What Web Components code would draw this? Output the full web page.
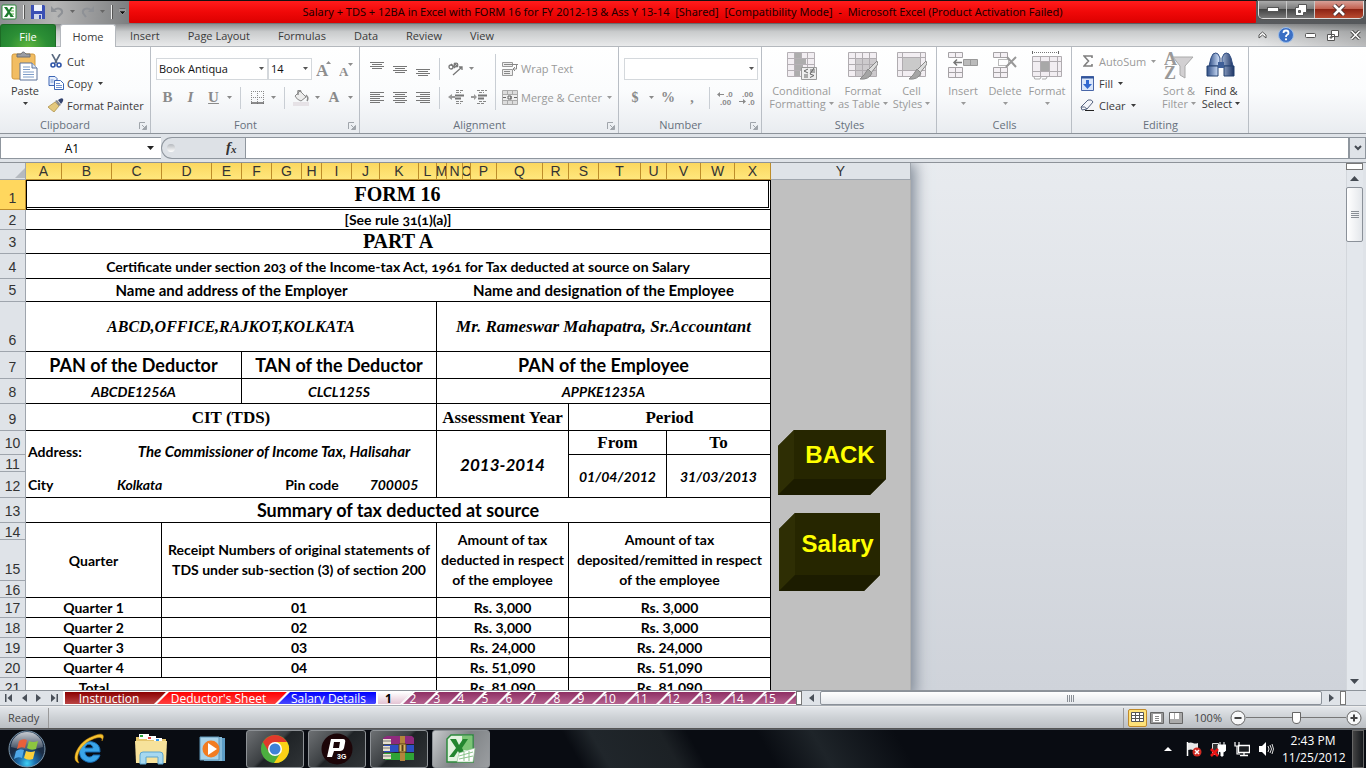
<!DOCTYPE html>
<html lang="en">
<head>
<meta charset="utf-8">
<title>Microsoft Excel</title>
<style>
html, body { margin: 0; height: 100%; }
body { font-family: "Open Sans", sans-serif; font-size: 11px; overflow: hidden; }
</style>
</head>
<body>
<xl-desktop></xl-desktop>
<script>
const ICONS = {
  excel: [16, 16, `<rect x="1" y="1" width="14" height="14" rx="1" fill="#fff" stroke="#2d8a3c"/><path d="M10 3h3v2h-3zM10 6h3v2h-3zM10 9h3v2h-3z" fill="#a8d8a0"/><path d="M3 3h3l2 3 2-3h2L9 8l4 5H9.500L8 10l-2 3H3l3.500-5z" fill="#1f7d2f"/>`],
  save: [14, 14, `<path d="M0 0h13l1 1v13H0z" fill="#3a4fb4"/><path d="M3 0h8v6H3z" fill="#eef2fb"/><path d="M3 9h8v5H3z" fill="#cfd6ea"/><path d="M8 10h2v4H8z" fill="#3a4fb4"/>`],
  undo: [13, 12, `<path d="M3 4c4-3 9-1 8 3l-4 4" fill="none" stroke="#8e9196" stroke-width="2"/><path d="M0 6V0l6 6z" fill="#8e9196"/>`],
  redo: [13, 12, `<path d="M10 4C6 1 1 3 2 7l3 4" fill="none" stroke="#8e9196" stroke-width="2"/><path d="M13 6V0L7 6z" fill="#8e9196"/>`],
  custom: [7, 7, `<path d="M0 0h7v1H0zM0 3h7L3.500 6.500z" fill="#111" stroke="#eee" stroke-width=".4"/>`],
  arrow: [5, 3, `<path d="M0 0h5L2.500 3z" fill="currentColor"/>`],
  arrowBig: [7, 4, `<path d="M0 0h7L3.500 4z" fill="currentColor"/>`],
  paste: [28, 30, `<rect x="1" y="3" width="23" height="25" rx="2" fill="#f2bd62" stroke="#d39a3f"/><path d="M6 5V3h4q2-4 5 0h4v3H6z" fill="#9b9da3" stroke="#6d7077"/><path d="M9 12h12l5 5v12H9z" fill="#fff" stroke="#5d7299"/><path d="M21 12v5h5" fill="#d9e4f4" stroke="#5d7299"/><path d="M12 16h7M12 18.500h7M12 21h11M12 23.500h11M12 26h11" stroke="#7d9cc8"/>`],
  cut: [12, 14, `<path d="M2 0l5 9M10 0L5 9" stroke="#5a6a80" stroke-width="1.600"/><circle cx="3" cy="11" r="2" fill="none" stroke="#2f55a8" stroke-width="1.600"/><circle cx="9" cy="11" r="2" fill="none" stroke="#2f55a8" stroke-width="1.600"/>`],
  copy: [16, 14, `<path d="M1 .5h6l2 2v7H1z" fill="#e6eefc" stroke="#3c65b4"/><path d="M6.500 4.500h6l3 3v6h-9z" fill="#fff" stroke="#3c65b4"/><path d="M2.500 4h3M2.500 6h3M8 7.500h4M8 9.500h6M8 11.500h6" stroke="#7293d0"/>`],
  brush: [16, 14, `<path d="M0 9l7-5 4 4-5 6q-4-3-6-5z" fill="#e3c87d" stroke="#a8893c" stroke-width=".7"/><path d="M7 3l2-1 4 5-2 1z" fill="#888"/><path d="M10 2q4-3 5-1t-2 5z" fill="#34436e"/>`],
  grow: [15, 16, `<text x="0" y="15" font-family="Liberation Serif" font-weight="bold" font-size="17" fill="#8e8e8e">A</text><path d="M10 3h5l-2.500-3z" fill="#8e8e8e"/>`],
  shrink: [15, 16, `<text x="0" y="15" font-family="Liberation Serif" font-weight="bold" font-size="13" fill="#8e8e8e">A</text><path d="M9 2h5l-2.500 3z" fill="#8e8e8e"/>`],
  borders: [13, 13, `<path d="M0 .5h13M.5 0v13M12.500 0v13M6.500 0v13M0 6.500h13" stroke="#8a8a8a" stroke-dasharray="1 1"/><path d="M0 12h13" stroke="#666" stroke-width="1.500"/>`],
  bucket: [16, 16, `<path d="M2 6l5-5 6 6-5 4q-4-1-6-5z" fill="#ececec" stroke="#8b8b8b"/><path d="M5 5V1q2-2 3 1M13 5q3 3 1 6" fill="none" stroke="#8b8b8b" stroke-width="1.500"/><path d="M0 12h16v4H0z" fill="#e6e2e6"/>`],
  alTop: [14, 16, `<path d="M0 1.500h14M2 3.500h10M0 5.500h14M2 7.500h10" stroke="#777"/>`],
  alMid: [14, 16, `<path d="M0 5.500h14M2 7.500h10M0 9.500h14M2 11.500h10" stroke="#777"/>`],
  alBot: [14, 16, `<path d="M0 8.500h14M2 10.500h10M0 12.500h14M2 14.500h10" stroke="#777"/>`],
  left: [14, 13, `<path d="M0 1.500h14M0 3.500h10M0 5.500h14M0 7.500h10M0 9.500h14M0 11.500h10" stroke="#777"/>`],
  center: [14, 13, `<path d="M0 1.500h14M2 3.500h10M0 5.500h14M2 7.500h10M0 9.500h14M2 11.500h10" stroke="#777"/>`],
  right: [14, 13, `<path d="M0 1.500h14M4 3.500h10M0 5.500h14M4 7.500h10M0 9.500h14M4 11.500h10" stroke="#777"/>`],
  orient: [16, 14, `<g fill="none" stroke="#777" stroke-width="1.300"><circle cx="3" cy="5" r="2"/><path d="M3 2l4 4M6 1l4 4"/><circle cx="8" cy="3" r="1.800"/><path d="M5 13l9-8M11 5h3v3"/></g>`],
  outdent: [16, 15, `<path d="M8 .5h8M8 2.500h5M8 11.500h8M8 13.500h5" stroke="#888" stroke-dasharray="3 1"/><path d="M7 5.500h9M7 8.500h6" stroke="#777" stroke-width="2"/><path d="M0 7l4-3v2h3v2H4v2z" fill="#999"/>`],
  indent: [16, 15, `<path d="M6 .5h10M8 2.500h5M8 11.500h8M6 13.500h7" stroke="#888" stroke-dasharray="3 1"/><path d="M7 5.500h9M7 8.500h6" stroke="#777" stroke-width="2"/><path d="M6 7L3 4v2H0v2h3v2z" fill="#999"/>`],
  wrap: [16, 15, `<path d="M.5 1.500h10v4H.5zM.5 8.500h10v6H.5z" fill="#eee" stroke="#999"/><path d="M2 3.500h14M2 10.500h6M2 12.500h6" stroke="#888"/><path d="M14.500 4v4h-3M13 6l-2 2 2 2" fill="none" stroke="#888"/>`],
  merge: [16, 15, `<path d="M.5.500h15v14H.5zM0 4.500h16M0 10.500h16M5.500 0v4M10.500 0v4M5.500 11v4M10.500 11v4" fill="#ddd" stroke="#aaa"/><path d="M1 5h14v5H1z" fill="#eee"/><path d="M1 7.500h3M12 7.500h3M6 6h3v3H6zM9 6v3.500" fill="none" stroke="#666"/>`],
  inc: [16, 14, `<text x="9" y="6" font-family="Liberation Sans" font-weight="bold" font-size="8" fill="#8a8a8a">.0</text><text x="3" y="14" font-family="Liberation Sans" font-weight="bold" font-size="8" fill="#8a8a8a">.00</text><path d="M0 3.500l3-2.500v2h4v1H3v2z" fill="#8a8a8a"/>`],
  dec: [16, 14, `<text x="3" y="6" font-family="Liberation Sans" font-weight="bold" font-size="8" fill="#8a8a8a">.00</text><text x="9" y="14" font-family="Liberation Sans" font-weight="bold" font-size="8" fill="#8a8a8a">.0</text><path d="M7 10.500L4 8v2H0v1h4v2z" fill="#8a8a8a"/>`],
  cond: [30, 30, `<path d="M.5 1.500h27v24H.5zM7.500 1v24M14.500 1v24M20.500 1v24M0 7.500h28M0 13.500h28M0 19.500h28" fill="#f2eef2" stroke="#b5b0b5"/><path d="M8 2h6v5H8zM8 8h11v5H8zM8 14h8v5H8zM8 20h5v5H8z" fill="#adadad"/><path d="M14.500 16.500h15v12h-15z" fill="#eee" stroke="#999"/><path d="M21 18l-4 2 4 2M17 24h4M17 26h4M23 19h5M23 21h5M27 17l-4 6M23 23l4 1.500-4 2" fill="none" stroke="#666"/>`],
  fmtTable: [30, 30, `<path d="M.5 1.500h28v24H.500zM7.500 1v24M14.500 1v24M21.500 1v24M0 7.500h28M0 13.500h28M0 19.500h28" fill="#f2eef2" stroke="#b0acb0"/><path d="M8 8h20v17H8z" fill="#cdcacd"/><path d="M14.500 8v17M21.500 8v17M8 13.500h20M8 19.500h20" stroke="#b0acb0"/><path d="M29 10l-9 9 3 3 7-9z" fill="#ddd" stroke="#888"/><path d="M20 18l4 4q-3 7-12 6 4-3 8-10z" fill="#a5a5a5" stroke="#8a8a8a"/>`],
  cellSt: [30, 30, `<path d="M.5 1.500h28v24H.500zM5.500 1v24M23.500 1v24M0 6.500h28M0 19.500h28" fill="#f2eef2" stroke="#b0acb0"/><path d="M6 7h17v12H6z" fill="#cacaca"/><path d="M29 10l-9 9 3 3 7-9z" fill="#ddd" stroke="#888"/><path d="M20 18l4 4q-3 7-12 6 4-3 8-10z" fill="#a5a5a5" stroke="#8a8a8a"/>`],
  insert: [30, 30, `<path d="M.5 1.500h14v5H.500zM7.500 1v5M.5 16.500h14v10H.500zM7.500 16v10M0 21.500h14" fill="#f4f0f4" stroke="#a5a2a5"/><path d="M15.500 8.500h14v6h-14zM22.500 8v6" fill="#bbb" stroke="#999"/><path d="M6 11.500h8M9 8.500l-3 3 3 3" fill="none" stroke="#777" stroke-width="1.500"/>`],
  delete: [30, 30, `<path d="M3.500 1.500h14v5h-14zM10.500 1v5M3.500 16.500h14v10h-14zM10.500 16v10M3 21.500h14" fill="#f4f0f4" stroke="#a5a2a5"/><path d="M8.500 8.500h10v6h-10z" fill="none" stroke="#777" stroke-dasharray="1 1"/><path d="M17 6l9 10M26 6l-10 10" stroke="#999" stroke-width="2"/>`],
  format: [30, 30, `<path d="M.5 0v3M26.500 0v3" stroke="#666"/><path d="M2 1.500h23" stroke="#777" stroke-dasharray="1 1"/><path d="M.5 5.500h29v20H.500zM8.500 5v20M17.500 5v20M25.500 5v20M0 10.500h30M0 20.500h30" fill="#f2eef2" stroke="#b0acb0"/><path d="M9 11h8v9H9z" fill="#a8a8a8"/><path d="M2 26q0 3 3 2h3l1-2M10 28h4l1-2" fill="none" stroke="#aaa"/>`],
  sigma: [10, 12, `<path d="M9 3V1H1l4.500 5L1 11h8V9" fill="none" stroke="#7f7f7f" stroke-width="1.600"/>`],
  fill: [14, 15, `<path d="M.5.500h12v14H.500z" fill="#d9e6fa" stroke="#4a67a8"/><path d="M0 1.500h13" stroke="#31549b" stroke-width="2"/><path d="M5 4h3v4h3l-4.500 5L2 8h3z" fill="#3168d0"/>`],
  clear: [15, 13, `<path d="M1 8l7-7q4-1 5 2l-6 7-5 1z" fill="#f3f5fa" stroke="#55637f"/><path d="M1 8q4-1 6 2" fill="none" stroke="#55637f"/><path d="M5 11.500h9" stroke="#222"/>`],
  sort: [30, 30, `<text x="0" y="14" font-family="Liberation Serif" font-weight="bold" font-size="18" fill="#999">A</text><text x="0" y="28" font-family="Liberation Serif" font-weight="bold" font-size="18" fill="#999">Z</text><path d="M9 6h20l-8 9v12l-5-3v-9z" fill="#d2d0d2" stroke="#aaa"/>`],
  find: [30, 30, `<defs><linearGradient id="b"><stop stop-color="#2f4e86"/><stop offset=".4" stop-color="#c4d6f2"/><stop offset="1" stop-color="#1e3565"/></linearGradient></defs><path d="M7 3q3-2 5 0l2 4v8H3l2-8zM18 3q2-2 5 0l2 4 2 8H16V7z" fill="url(#b)" stroke="#304d82"/><path d="M1 15h11v10H1zM18 15h10v10H18z" fill="url(#b)" stroke="#23406f"/><path d="M12 11h6v6h-6z" fill="#3f5f98"/>`],
  launch: [8, 8, `<path d="M.5 7V.500H6" fill="none" stroke="currentColor"/><path d="M3 3l3 3M7.500 3.500v4h-4z" stroke="currentColor" fill="currentColor"/>`],
  chevUp: [9, 8, `<path d="M1 4l3.500-3L8 4v3L4.500 4 1 7z" fill="#fff" stroke="#555"/>`],
  help: [16, 16, `<circle cx="8" cy="8" r="7.500" fill="#3b6fc4" stroke="#9cbde8"/><path d="M5.500 6q0-2.500 2.500-2.500T10.500 6q0 1-1.300 1.800T8 10" fill="none" stroke="#fff" stroke-width="1.800"/><circle cx="8" cy="12.300" r="1.100" fill="#fff"/>`],
  min2: [11, 5, `<rect x=".5" y=".5" width="10" height="4" rx="1" fill="#fff" stroke="#555"/>`],
  rest2: [12, 11, `<path d="M4.500.500h7v6h-7zM.500 4.500h7v6h-7zM3 7h2v1H3z" fill="#fff" stroke="#555"/>`],
  close2: [11, 10, `<path d="M1.500 1l8 8M9.500 1l-8 8" stroke="#444" stroke-width="3.400"/><path d="M1.500 1l8 8M9.500 1l-8 8" stroke="#fff" stroke-width="1.600"/>`],
  min1: [12, 5, `<rect x=".5" y=".5" width="11" height="4" fill="#fff" stroke="#555"/>`],
  rest1: [12, 12, `<path d="M3.500.500h8v8h-3v3h-8v-8h3z" fill="#fff" stroke="#555"/><path d="M3.500 6.500h2v2h-2z" fill="#777" stroke="#555"/>`],
  close1: [14, 12, `<path d="M2 1l10 10M12 1L2 11" stroke="#4a3030" stroke-width="4.500"/><path d="M2 1l10 10M12 1L2 11" stroke="#fff" stroke-width="2.600"/>`],
  grid: [14, 11, `<path d="M.5.500h12v9H.500zM4.500 0v9M8.500 0v9M0 3.500h13M0 6.500h13" fill="#fff" stroke="#555"/>`],
  page: [14, 12, `<path d="M.5.500h13v11H.500z" fill="#999" stroke="#666"/><path d="M3 2h8v8H3z" fill="#fff"/><path d="M5 4.500h4M5 6.500h4M5 8.500h4" stroke="#888"/>`],
  pbreak: [14, 12, `<path d="M.5.500h13v11H.500z" fill="#aaa" stroke="#666"/><path d="M1 1h4v6H1zM6 1h4v6H6z" fill="#fff"/>`],
  minus: [16, 16, `<circle cx="8" cy="8" r="7" fill="#f7f8f9" stroke="#666"/><path d="M4.500 8h7" stroke="#444" stroke-width="2"/>`],
  plus: [16, 16, `<circle cx="8" cy="8" r="7" fill="#f7f8f9" stroke="#666"/><path d="M4.500 8h7M8 4.500v7" stroke="#444" stroke-width="2"/>`],
  first: [7, 8, `<path d="M0 0h1.500v8H0zM7 0v8L2.500 4z" fill="#4a5059"/>`],
  prev: [5, 8, `<path d="M5 0v8L0 4z" fill="#4a5059"/>`],
  next: [5, 8, `<path d="M0 0v8l5-4z" fill="#4a5059"/>`],
  last: [7, 8, `<path d="M5.500 0H7v8H5.500zM0 0v8l4.500-4z" fill="#4a5059"/>`],
  up: [9, 5, `<path d="M0 5h9L4.500 0z" fill="#444a52"/>`],
  down: [9, 5, `<path d="M0 0h9L4.500 5z" fill="#444a52"/>`],
  chev: [8, 6, `<path d="M1 1l3 3 3-3" fill="none" stroke="#444a52" stroke-width="2"/>`],
  orb: [38, 38, `<defs><radialGradient id="o" cy=".9"><stop stop-color="#3fd0f5"/><stop offset=".45" stop-color="#1c6fae"/><stop offset="1" stop-color="#1b2d45"/></radialGradient><linearGradient id="h" x2="0" y2="1"><stop stop-color="#fff" stop-opacity=".75"/><stop offset="1" stop-color="#fff" stop-opacity=".15"/></linearGradient></defs><circle cx="19" cy="19" r="18" fill="url(#o)" stroke="#7c98ad"/><path d="M3 17a16 15 0 0 1 32 0q-16 5-32 0z" fill="url(#h)"/><path d="M11 11q4-3 8-1l-2 8q-4-2-8 1z" fill="#e8603a"/><path d="M21 11q4 2 9 0l-2 8q-5 2-9-1z" fill="#8cc63f"/><path d="M8 21q4-3 8-1l-2 8q-4-2-8 1z" fill="#4fa8e8"/><path d="M18 21q5 2 9 0l-2 8q-5 2-9-1z" fill="#fbd03b"/>`],
  ie: [34, 34, `<path d="M28 23c-2 7-10 9-15 6-7-3-7-13-2-17 6-5 18-2 17 8H13c0 6 7 6 8 3zM13 16h8c-1-5-7-5-8 0z" fill="#3aa5e8" fill-rule="evenodd" stroke="#1769b0"/><path d="M7 31C-2 29 5 12 17 6S34 1 30 9C31 3 23 6 17 9 8 14 3 25 7 31z" fill="#f6c22f" stroke="#c98a12" stroke-width=".5"/>`],
  folder: [34, 32, `<path d="M2 4h9l2 2h19v24H2z" fill="#e6c66c"/><path d="M5 1h10v5H5zM13 3h9v4h-9zM20 5h8v4h-8z" fill="#fff"/><path d="M6 2h3v2H6z" fill="#2ba83d"/><path d="M14 4h3v2h-3z" fill="#d44"/><path d="M22 6h3v2h-3z" fill="#39e"/><path d="M1 8h32l-1 22H2z" fill="#f7e29b"/><path d="M6 31V22q0-3 3-3h17q3 0 3 3v9h-5v-7H12v7z" fill="#a6d8f0" stroke="#5ca5cf"/>`],
  wmp: [28, 26, `<path d="M8 2h18v23H8z" fill="#5d9cc4"/><path d="M5 1h18v24H5z" fill="#86bbd9"/><path d="M1 1h19v23H1z" fill="#a8d3ea" stroke="#5f96b8"/><circle cx="12" cy="13" r="8.500" fill="#f27c21"/><path d="M9 7v12l9-6z" fill="#fff"/>`],
  chrome: [30, 30, `<circle cx="15" cy="15" r="14" fill="#4caf3f"/><path d="M2.900 8A14 14 0 0 1 27.100 8L15 9l-6 9z" fill="#e0392b"/><path d="M27.100 8A14 14 0 0 1 14 29l7-11-6-10z" fill="#fcd116"/><circle cx="15" cy="15" r="7" fill="#fff"/><circle cx="15" cy="15" r="5.500" fill="#3e82d8"/>`],
  p3g: [32, 32, `<circle cx="16" cy="16" r="15.500" fill="#1c0508"/><path d="M10 6h12q3 0 2 4l-1 5q-1 3-4 3h-6l-2 6H6zM13 9l-1 6h6l1-6z" fill="#fff" fill-rule="evenodd"/><text x="16" y="26" font-family="Liberation Sans" font-weight="bold" font-size="7" fill="#fff">3G</text>`],
  rar: [34, 26, `<path d="M1 2l4-2h25l2 2v6H3z" fill="#8f2a7d"/><path d="M2 9h30v7H2z" fill="#2d4fc4"/><path d="M2 17h30v7H3z" fill="#2fa336"/><path d="M1 3h8v5H1zM1 10h7v5H1zM1 18h8v5H1z" fill="#e9e2d0"/><path d="M1 5h8M1 12h7M1 20h8" stroke="#777"/><path d="M18 0h5v25h-5z" fill="#b4853c"/><path d="M17 8h7v8h-7z" fill="#d8b765" stroke="#5a3d12"/><path d="M20.500 9v6" stroke="#5a3d12" stroke-width="2"/>`],
  xlBig: [32, 30, `<path d="M6 1h22v27H2V5z" fill="#e2f3df" stroke="#2c8a3c" stroke-width="1.500"/><path d="M17 2h10v14H17z" fill="#7cc576"/><path d="M5 5h6l3 6 4-6h5l-6 9 5 9h-6l-3-6-4 6H4l7-9z" fill="#23862f"/><path d="M14 19l16-5-2 14H12z" fill="#fff" stroke="#8abf8c" stroke-width=".6"/><path d="M14 22l14-4M14 25l14-3M19 18v9M24 17v10" stroke="#8cc38c"/>`],
  flag: [16, 16, `<path d="M1.500 1v14" stroke="#fff" stroke-width="1.500"/><path d="M2 2q3-1 5 0t5 0v7q-3 1-5 0t-5 0z" fill="#e8e8e8"/><circle cx="11" cy="11" r="4.500" fill="#d02a22"/><path d="M9 9l4 4M13 9l-4 4" stroke="#fff" stroke-width="1.500"/>`],
  plug: [16, 16, `<path d="M2.500 2.500h6v11h-6z" fill="#333" stroke="#ddd"/><path d="M10 4V1M14 4V1M8 4h8v3q0 4-3 4v4h-2v-4q-3 0-3-4z" fill="#fff" stroke="#fff"/><path d="M1 8l7 7M8 8l-7 7" stroke="#e81414" stroke-width="2.500"/>`],
  net: [16, 16, `<path d="M4.500 4.500h11v7h-11zM10 12v2M6 14.500h8" fill="#1b1e22" stroke="#fff" stroke-width="1.300"/><path d="M1 1v4h4V1M3 5v8h3" fill="none" stroke="#fff" stroke-width="1.200"/>`],
  sound: [16, 16, `<path d="M1 5h3l4-4v14l-4-4H1z" fill="#fff"/><path d="M10 5q2 3 0 6M12 4q3 4 0 8M14 3q3 5 0 10" fill="none" stroke="#ddd"/>`],
  fx: [14, 14, `<text x="0" y="11" font-family="Liberation Serif" font-weight="bold" font-style="italic" font-size="15" fill="#333">f</text><text x="5" y="12" font-family="Liberation Serif" font-weight="bold" font-style="italic" font-size="11" fill="#333">x</text>`]
};

function define(name, css, html) {
  const t = document.createElement('template');
  customElements.define(name, class extends HTMLElement {
    connectedCallback() {
      if (this.shadowRoot) return;
      const root = this.attachShadow({ mode: 'open' });
      t.innerHTML = '<style>*{box-sizing:border-box}button{font:inherit;color:inherit;border:0;background:none;padding:0;margin:0}' + css + '</style>' + (typeof html === 'function' ? html(this) : html);
      root.append(t.content.cloneNode(true));
    }
  });
}
const ic = n => `<xl-icon name="${n}"></xl-icon>`;

define('xl-icon', ':host{display:inline-block;flex:none;line-height:0}svg{display:block}', el => {
  const [w, h, body] = ICONS[el.getAttribute('name')];
  return `<svg width="${w}" height="${h}" viewBox="0 0 ${w} ${h}" aria-hidden="true">${body}</svg>`;
});

/* Button with an icon above its caption */
define('rb-big', `:host{--w:42px;display:block;flex:none;width:var(--w);color:#3b3b3b}:host([off]){color:#9a9a9a}
button{display:flex;flex-direction:column;align-items:center;width:100%;line-height:13px;white-space:nowrap}
.i{height:34px;padding-top:1px}.l2{min-height:13px;display:flex;align-items:center;gap:3px}`,
  el => `<button type="button"><span class="i">${ic(el.getAttribute('icon'))}</span><span>${el.getAttribute('a').replace('&', '&amp;')}</span><span class="l2">${el.getAttribute('b') || ''}${ic('arrow')}</span></button>`);

/* One-line button: icon, caption, optional arrow */
define('rb-small', `:host{display:block;color:#3b3b3b}:host([off]){color:#9a9a9a}
button{display:flex;align-items:center;height:22px;white-space:nowrap}.i{width:19px;display:flex;justify-content:center;margin-right:2px}.a{margin-left:5px;display:flex}`,
  el => `<button type="button"><span class="i">${ic(el.getAttribute('icon'))}</span><slot></slot>${el.hasAttribute('menu') ? `<span class="a">${ic('arrow')}</span>` : ''}</button>`);

/* Icon-only tool */
define('rb-tool', `:host{--w:23px;display:block;flex:none;width:var(--w);color:#8a8a8a}
button{width:100%;height:22px;display:flex;align-items:center;justify-content:center}`,
  el => `<button type="button" aria-label="${el.getAttribute('name')}">${el.hasAttribute('icon') ? ic(el.getAttribute('icon')) : '<slot></slot>'}</button>`);

define('rb-sep', `:host{--w:10px;display:block;flex:none;width:var(--w);height:22px;background:linear-gradient(#c9ced4,#c9ced4) center/1px 100% no-repeat}`, '');

define('rb-combo', `:host{display:grid;width:var(--w);height:22px;color:#555}
select{grid-area:1/1;appearance:none;border:1px solid #d4d8dc;background:#fff;font:inherit;color:#111;padding:0 2px;margin:0;border-radius:0;width:100%}
xl-icon{grid-area:1/1;justify-self:end;align-self:center;margin-right:4px;pointer-events:none}`,
  el => `<select aria-label="${el.getAttribute('name')}"><option>${el.getAttribute('value') || ''}</option></select>${ic('arrow')}`);

define('rb-group', `:host{display:flex;flex:none;flex-direction:column;width:var(--w);border-right:1px solid #b9bec5;margin-right:1px;height:86px}
.c{flex:1;display:flex;padding:3px 4px 0}.f{height:17px;display:flex;align-items:center;color:#67707c;line-height:16px}.f span{flex:1;text-align:center}
.f button{width:20px;color:#a0a5ab;padding:2px 0 0 6px}`,
  el => `<div class="c"><slot></slot></div><div class="f"><span>${el.getAttribute('label')}</span>${el.hasAttribute('launch') ? `<button type="button" aria-label="${el.getAttribute('label')} options">${ic('launch')}</button>` : ''}</div>`);

define('xl-title', `:host{display:flex;height:24px;background:linear-gradient(90deg,#8d8f92,#b5b5b5 4%,#77797b 10%,#55585b);border-top:1px solid #111;align-items:flex-start}
.q{width:129px;height:21px;display:flex;align-items:center;gap:6px;padding-left:1px;color:#666;flex:none}.q button{display:flex}
.q i{width:2px;height:14px;border-left:1px solid #eee;background:#555}
h1{flex:1;margin:0;height:22px;background:linear-gradient(#ff1c1c,#f00808 50%,#dc0000);font:400 11px/22px "Noto Sans","Open Sans",sans-serif;text-align:center;white-space:pre;color:#200;border-radius:1px;overflow:hidden;padding-right:20px}
.w{display:flex;margin:0 2px;height:18px;border:1px solid #ddd;border-top:0;border-radius:0 0 5px 5px;overflow:hidden;box-shadow:0 0 0 1px #555}
.w button{display:flex;align-items:center;justify-content:center;width:28px;height:17px;border-right:1px solid #c8c8c8;background:linear-gradient(#aaa,#777 50%,#444 50%,#777)}
.w button:last-child{width:48px;border:0;background:linear-gradient(#d8a098,#c05a48 50%,#8e2414 50%,#b84a30)}`,
  `<div class="q">${ic('excel')}<i></i><button aria-label="Save">${ic('save')}</button><button aria-label="Undo">${ic('undo')}</button>${ic('arrow')}<button aria-label="Redo">${ic('redo')}</button>${ic('arrow')}<i></i><button aria-label="Customize">${ic('custom')}</button></div>
<h1>Salary + TDS + 12BA in Excel with FORM 16 for FY 2012-13 &amp; Ass Y 13-14  [Shared]  [Compatibility Mode]  -  Microsoft Excel (Product Activation Failed)</h1>
<div class="w"><button aria-label="Minimize">${ic('min1')}</button><button aria-label="Restore">${ic('rest1')}</button><button aria-label="Close">${ic('close1')}</button></div>`);

define('xl-menu', `:host{display:flex;height:23px;background:linear-gradient(90deg,transparent 92%,#0003),linear-gradient(#8e9092,#c9cbcc 35%,#e9eaeb);border-bottom:1px solid #b4b8bd;align-items:stretch}
nav{display:flex;margin-bottom:-1px}nav button{padding:0 14px;color:#3b3b3b;height:23px}
nav .file{width:56px;padding:0;color:#fff;border:1px solid #1d6b25;border-bottom:0;border-radius:3px 3px 0 0;background:radial-gradient(ellipse at 50% 100%,#5fb53e,#2c8f35 50%,#1e7b2e);margin-right:4px}
nav .on{width:56px;padding:0;background:#fff;border:1px solid #b4b8bd;border-bottom:0;border-radius:3px 3px 0 0}
.r{margin-left:auto;display:flex;align-items:center;gap:11px;padding-right:5px}.r button{display:flex}`,
  `<nav aria-label="Ribbon tabs"><button class="file">File</button><button class="on">Home</button><button>Insert</button><button>Page Layout</button><button>Formulas</button><button>Data</button><button>Review</button><button>View</button></nav>
<div class="r"><button aria-label="Collapse">${ic('chevUp')}</button><button aria-label="Help">${ic('help')}</button><button aria-label="Minimize workbook">${ic('min2')}</button><button aria-label="Restore workbook">${ic('rest2')}</button><button aria-label="Close workbook">${ic('close2')}</button></div>`);

define('xl-ribbon', `:host{display:flex;background:linear-gradient(#fff,#fbfcfd 50%,#e9ecf0);border-bottom:1px solid #8d939a;height:87px}
.col{display:flex;flex-direction:column}.row{display:flex;align-items:center;height:29px}
.two{padding-top:4px}.tall{height:56px;margin-top:4px}
b,i,u{font-family:"Liberation Serif",serif;font-size:15px;font-weight:700}.sm{font-size:14px;font-family:"Liberation Serif",serif;font-weight:700}
.ed{width:86px;padding-left:1px}`,
`<rb-group label="Clipboard" launch style="--w:151px">
 <rb-big icon="paste" a="Paste" style="--w:42px"></rb-big>
 <div class="col"><rb-small icon="cut">Cut</rb-small><rb-small icon="copy" menu>Copy</rb-small><rb-small icon="brush">Format Painter</rb-small></div>
</rb-group>
<rb-group label="Font" launch style="--w:208px"><div class="col two">
 <div class="row"><rb-combo name="Font" value="Book Antiqua" style="--w:112px"></rb-combo><rb-combo name="Font size" value="14" style="--w:44px"></rb-combo><rb-tool name="Grow font" icon="grow"></rb-tool><rb-tool name="Shrink font" icon="shrink"></rb-tool></div>
 <div class="row"><rb-tool name="Bold"><b>B</b></rb-tool><rb-tool name="Italic"><i>I</i></rb-tool><rb-tool name="Underline"><u>U</u></rb-tool><rb-tool name="Underline menu" icon="arrow" style="--w:9px"></rb-tool><rb-sep style="--w:13px"></rb-sep><rb-tool name="Borders" icon="borders" style="--w:20px"></rb-tool><rb-tool name="Borders menu" icon="arrow" style="--w:12px"></rb-tool><rb-sep></rb-sep><rb-tool name="Fill color" icon="bucket" style="--w:24px"></rb-tool><rb-tool name="Fill menu" icon="arrow" style="--w:8px"></rb-tool><rb-tool name="Font color" style="--w:26px"><b>A</b></rb-tool><rb-tool name="Font color menu" icon="arrow" style="--w:6px"></rb-tool></div>
</div></rb-group>
<rb-group label="Alignment" launch style="--w:258px">
 <div class="col two">
 <div class="row"><rb-tool name="Top" icon="alTop"></rb-tool><rb-tool name="Middle" icon="alMid"></rb-tool><rb-tool name="Bottom" icon="alBot"></rb-tool><rb-sep></rb-sep><rb-tool name="Orientation" icon="orient"></rb-tool><rb-tool name="Orientation menu" icon="arrow" style="--w:8px"></rb-tool></div>
 <div class="row"><rb-tool name="Left" icon="left"></rb-tool><rb-tool name="Center" icon="center"></rb-tool><rb-tool name="Right" icon="right"></rb-tool><rb-sep></rb-sep><rb-tool name="Decrease indent" icon="outdent"></rb-tool><rb-tool name="Increase indent" icon="indent"></rb-tool></div></div>
 <rb-sep class="tall"></rb-sep>
 <div class="col two"><div class="row"><rb-small off icon="wrap">Wrap Text</rb-small></div><div class="row"><rb-small off icon="merge" menu>Merge &amp; Center</rb-small></div></div>
</rb-group>
<rb-group label="Number" launch style="--w:142px"><div class="col two">
 <div class="row"><rb-combo name="Number format" style="--w:134px"></rb-combo></div>
 <div class="row"><rb-tool name="Currency" style="--w:22px"><span class="sm">$</span></rb-tool><rb-tool name="Currency menu" icon="arrow" style="--w:10px"></rb-tool><rb-tool name="Percent" style="--w:24px"><span class="sm">%</span></rb-tool><rb-tool name="Comma" style="--w:24px"><span class="sm">,</span></rb-tool><rb-sep></rb-sep><rb-tool name="Increase decimal" icon="inc" style="--w:22px"></rb-tool><rb-tool name="Decrease decimal" icon="dec" style="--w:22px"></rb-tool></div>
</div></rb-group>
<rb-group label="Styles" style="--w:174px"><rb-big off icon="cond" a="Conditional" b="Formatting" style="--w:69px"></rb-big><rb-big off icon="fmtTable" a="Format" b="as Table" style="--w:54px"></rb-big><rb-big off icon="cellSt" a="Cell" b="Styles" style="--w:43px"></rb-big></rb-group>
<rb-group label="Cells" style="--w:134px"><rb-big off icon="insert" a="Insert"></rb-big><rb-big off icon="delete" a="Delete"></rb-big><rb-big off icon="format" a="Format"></rb-big></rb-group>
<rb-group label="Editing" style="--w:176px"><div class="col ed"><rb-small off icon="sigma" menu>AutoSum</rb-small><rb-small icon="fill" menu>Fill</rb-small><rb-small icon="clear" menu>Clear</rb-small></div><rb-big off icon="sort" a="Sort &" b="Filter" style="--w:38px"></rb-big><rb-big icon="find" a="Find &" b="Select" style="--w:46px"></rb-big></rb-group>`);

define('xl-formula', `:host{display:flex;height:29px;padding:3px 0 4px;background:#dfe3e8;border-bottom:1px solid #8d9299}
:host>*{height:22px;border:1px solid #8f969e}
.n{width:161px;display:flex;background:#fff;border-width:1px 0 1px 1px;align-items:center;color:#222}
.n input{width:140px;border:0;padding:0 0 0 2px;text-align:center;font:12px "Open Sans",sans-serif;background:none;outline:0}
.n button{display:flex;margin-left:6px}
.f{width:84px;background:#dde1e6;border-left-color:#8f969e;border-right:0;border-radius:12px 0 0 12px;display:flex;align-items:center;justify-content:space-between;padding:0 5px}
.f i{width:8px;height:8px;border-radius:50%;background:linear-gradient(#b5b9be,#fff)}
.v{flex:1;min-width:0;background:#fff;padding:0 4px;border:1px solid #8f969e}.e{width:17px;background:#dfe3e8;border:1px solid #8f969e;display:flex;align-items:center;justify-content:center}`,
`<div class="n"><input aria-label="Name box" value="A1"><button aria-label="Names">${ic('arrowBig')}</button></div><div class="f"><i></i>${ic('fx')}</div><input class="v" aria-label="Formula"><button class="e" aria-label="Expand">${ic('chev')}</button>`);

const COLS = [36,50,50,50,30,30,30,20,30,28,39,18,10,16,8,26,46,26,30,42,26,34,34,36];
/* [row height, [[colspan, rowspan, classes, text], ...]] */
const ROWS = [
  [30, [[24,1,'ser xl sel','FORM 16']]],
  [20, [[24,1,'cor','[See rule 31(1)(a)]']]],
  [24, [[24,1,'ser xl','PART A']]],
  [25, [[24,1,'cor','Certificate under section 203 of the Income-tax Act, 1961 for Tax deducted at source on Salary']]],
  [23, [[12,1,'m nr','Name and address of the Employer'],[12,1,'m','Name and designation of the Employee']]],
  [50, [[12,1,'ser it s','ABCD,OFFICE,RAJKOT,KOLKATA'],[12,1,'ser it','Mr. Rameswar Mahapatra, Sr.Accountant']]],
  [27, [[5,1,'l','PAN of the Deductor'],[7,1,'l','TAN of the Deductor'],[12,1,'l','PAN of the Employee']]],
  [25, [[5,1,'it','ABCDE1256A'],[7,1,'it','CLCL125S'],[12,1,'it','APPKE1235A']]],
  [27, [[12,1,'ser','CIT (TDS)'],[6,1,'ser','Assessment Year'],[6,1,'ser','Period']]],
  [24, [[2,2,'le nr nb','Address:'],[10,2,'it nb m','The Commissioner of Income Tax, Halisahar'],[6,3,'k it','2013-2014'],[3,1,'ser','From'],[3,1,'ser','To']]],
  [17, [[3,2,'it','01/04/2012'],[3,2,'it','31/03/2013']]],
  [26, [[2,1,'le nr','City'],[4,1,'le it nr ko','Kolkata'],[3,1,'nr','Pin code'],[3,1,'it','700005']]],
  [25, [[24,1,'l','Summary of tax deducted at source']]],
  [17, [[3,3,'','Quarter'],[9,3,'p','Receipt Numbers of original statements of<br>TDS under sub-section (3) of section 200'],[6,3,'p','Amount of tax<br>deducted in respect<br>of the employee'],[6,3,'p','Amount of tax<br>deposited/remitted in respect<br>of the employee']]],
  [41, []], [17, []],
  ...[['1','01','3,000'],['2','02','3,000'],['3','03','24,000'],['4','04','51,090']].map(([q, n, a]) => [20, [[3,1,'','Quarter ' + q],[9,1,'',n],[6,1,'','Rs. ' + a],[6,1,'','Rs. ' + a]]]),
  [20, [[3,1,'nr','Total'],[9,1,'',''],[6,1,'','Rs. 81,090'],[6,1,'','Rs. 81,090']]]
];

define('xl-shape', `:host{--t:10px;display:block;position:absolute;left:var(--x);top:var(--y);width:var(--w);height:var(--h)}
button{display:grid;width:100%;height:100%;font:bold 24px/30px "Liberation Sans",sans-serif;color:#ff0}
svg,span{grid-area:1/1}span{padding:var(--t) 0 0 16px;align-self:start}`,
  el => { const w = +el.getAttribute('w'), h = +el.getAttribute('h'); return `<button type="button"><svg width="${w}" height="${h}" aria-hidden="true"><path d="M16 0H${w}V${h - 16}L${w - 16} ${h}H0V16z" fill="#262600"/><path d="M16 0v${h - 16}L0 ${h}V16z" fill="#2e2e04"/><path d="M16 ${h - 16}H${w}L${w - 16} ${h}H0z" fill="#1c1c00"/></svg><span><slot></slot></span></button>`; });

define('xl-sheet', `:host{display:flex;flex:1;min-height:0;overflow:hidden;background:linear-gradient(#e8ebef,#cfd3da)}
.canvas{position:relative;flex:1;min-width:0;overflow:hidden}
table{border-collapse:separate;border-spacing:0;table-layout:fixed;width:911px;font:bold 14px/19px Lato,"Open Sans",sans-serif;color:#000;box-shadow:4px 0 14px #7d8794}
th,td{padding:0;overflow:hidden;white-space:nowrap}
th{font:14px/16px "Liberation Sans",sans-serif;color:#333;background:#dfe3e8;border-right:1px solid #9fa5ad;border-bottom:1px solid #9fa5ad}
thead th{height:17px;background:linear-gradient(#fbd75f,#ffe77c);border-color:#bd8d2b;text-align:center}
thead th:first-child,thead th:last-child{background:#dfe3e8;border-color:#9fa5ad}
thead div{width:100%;margin:0 -5px;padding:0 5px;box-sizing:content-box;display:flex;justify-content:center}
tbody th{vertical-align:bottom;line-height:14px}tbody tr:first-child th{background:#ffd75e;border-color:#bd8d2b}
tbody th.a{padding-bottom:2px}tbody th.b{padding-bottom:4px}
td{background:#fff;border-right:1px solid #000;border-bottom:1px solid #000;text-align:center}
.nr{border-right:0}.nb{border-bottom:0}.le{text-align:left;padding-left:2px}.ko{padding-left:5px}.it{font-style:italic}.p{line-height:20px}
.ser{font-family:"Liberation Serif",serif;font-size:17px}.xl{font-size:20px}.cor{font-variant-numeric:oldstyle-nums}.l{font-size:18px}.k{font-size:17px}.m{font-size:15px}.s{font-size:16px}
.sel{border:1px solid #000;border-width:1px 3px 3px 1px;border-bottom-style:double;border-right-style:double}
.y{background:silver;border:0;border-right:1px solid #b0b0b0}
.corner{display:inline-block;border:5px solid transparent;border-right-color:#b5bac0;border-bottom-color:#b5bac0;margin:3px 0 0 8px;float:right}
.sb{width:20px;display:flex;flex-direction:column;align-items:center;background:#e3e7ec;border-right:3px solid #dfe3e8;box-shadow:inset 1px 0 #d3d7dc}
.sb button{width:17px;display:flex;align-items:center;justify-content:center}
.sb .sp{height:7px;border:1px solid #777;background:#fff}.sb .ar{height:17px}.sb .th{height:55px;border:1px solid #8b9199;border-radius:2px;background:linear-gradient(90deg,#fff,#e4e7eb)}
.th i{width:8px;height:8px;background:repeating-linear-gradient(#8a8f96 0 1px,transparent 1px 2px)}.sb .dn{margin-top:auto}`,
() => `<div class="canvas"><table><colgroup><col style="width:26px">${COLS.map(w => `<col style="width:${w}px">`).join('')}<col style="width:140px"></colgroup>
<thead><tr><th><span class="corner"></span></th>${[...'ABCDEFGHIJKLMNOPQRSTUVWXY'].map(c => `<th><div>${c}</div></th>`).join('')}</tr></thead>
<tbody>${ROWS.map(([h, cells], i) => `<tr style="height:${h}px"><th class="${h > 22 ? 'b' : h > 17 ? 'a' : ''}">${i + 1}</th>${cells.map(([c, r, k, t]) => `<td colspan="${c}" rowspan="${r}" class="${k}">${t}</td>`).join('')}${i ? '' : '<td class="y" rowspan="21"></td>'}</tr>`).join('')}</tbody></table>
<xl-shape w="108" h="65" style="--x:778px;--y:267px;--w:108px;--h:65px">BACK</xl-shape><xl-shape w="101" h="78" style="--x:779px;--y:350px;--w:101px;--h:78px;--t:16px">Salary</xl-shape></div>
<div class="sb"><button class="sp" aria-label="Split"></button><button class="ar" aria-label="Scroll up">${ic('up')}</button><button class="th" aria-label="Scroll thumb"><i></i></button><button class="ar dn" aria-label="Scroll down">${ic('down')}</button></div>`);

define('xl-tab', `:host{display:block;flex:none;position:relative;width:var(--w);height:14px;color:#fff;z-index:0}
button{width:100%;height:14px;line-height:14px;font-size:12px;text-align:center;padding-left:var(--p,0)}
:host::before,:host::after{content:"";position:absolute;z-index:-1;top:0;bottom:0;left:0;right:-12px;background:#fff;clip-path:polygon(var(--l,12px) 0,100% 0,calc(100% - 12px) 100%,0 100%)}
:host::after{left:2px;right:-11px;bottom:1px;top:1px;background:linear-gradient(var(--c,#8e2f64),var(--d,#b5628f))}
:host([on]){color:#000}:host([on]) button{font-weight:700}`, '<button type="button"><slot></slot></button>');

define('xl-tabs', `:host{display:flex;height:16px;background:#dfe3e8;border-top:1px solid #8d939a;border-bottom:1px solid #a5abb2}
.n{width:63px;display:flex;align-items:center;justify-content:space-around;flex:none}.n button{display:flex}
.t{display:flex;width:733px;overflow:hidden;flex:none;background:#c4c9cf}
.h{flex:1;display:flex;align-items:center;margin-right:20px}.h>button{display:flex;align-items:center;justify-content:center;height:14px}
.h .s{width:6px;border:1px solid #777;background:#fff}.a{width:18px}.h .th{flex:1;border:1px solid #8b9199;border-radius:2px;background:linear-gradient(#fff,#e4e7eb)}
.th i{width:8px;height:7px;background:repeating-linear-gradient(90deg,#8a8f96 0 1px,transparent 1px 2px)}`,
`<div class="n"><button aria-label="First sheet">${ic('first')}</button><button aria-label="Previous sheet">${ic('prev')}</button><button aria-label="Next sheet">${ic('next')}</button><button aria-label="Last sheet">${ic('last')}</button></div>
<div class="t"><xl-tab style="--w:92px;--l:0px;--c:#8b0000;--d:#b44">Instruction</xl-tab><xl-tab style="--w:121px;--p:6px;--c:#f00;--d:#ff4040">Deductor's Sheet</xl-tab><xl-tab style="--w:100px;--p:5px;--c:#00f;--d:#4747ff">Salary Details</xl-tab><xl-tab on style="--w:25px;--l:0px;--c:#fff;--d:#e4c4d4">1</xl-tab>${[2,3,4,5,6,7,8,9].map(n => `<xl-tab style="--w:24px">${n}</xl-tab>`).join('')}${[10,11,12,13,14,15].map(n => `<xl-tab style="--w:32px">${n}</xl-tab>`).join('')}<xl-tab style="--w:32px"></xl-tab></div>
<div class="h"><button class="s" aria-label="Resize tabs"></button><button class="a" aria-label="Scroll left">${ic('prev')}</button><button class="th" aria-label="Horizontal thumb"><i></i></button><button class="a" aria-label="Scroll right">${ic('next')}</button><button class="s" aria-label="Split"></button></div>`);

define('xl-status', `:host{display:flex;height:23px;align-items:center;padding:0 4px 0 8px;color:#444;background:linear-gradient(#e3e6ea,#cdd1d5 50%,#bbbfc4);border-top:1px solid #eee;border-bottom:1px solid #555}
hr{width:1px;height:20px;border:0;border-left:1px solid #999;background:#fff;margin:0 0 0 9px}.r{margin-left:auto;display:flex;align-items:center}
.r>button{display:flex;justify-content:center;align-items:center;height:18px;width:19px}.r>.on{border:1px solid #c08a2b;border-radius:2px;background:#ffe278}
.p{margin:0 8px 0 9px}input{appearance:none;width:100px;height:16px;margin:0;background:linear-gradient(#777,#777) center/100% 1px no-repeat}
input::-webkit-slider-thumb{appearance:none;width:9px;height:12px;background:#fff;border:1px solid #666;border-radius:1px 1px 5px 5px}
.r>.z{width:16px}`,
`<span>Ready</span><hr><div class="r"><hr style="margin-right:4px"><button class="on" aria-label="Normal">${ic('grid')}</button><button aria-label="Page layout">${ic('page')}</button><button aria-label="Page break">${ic('pbreak')}</button><span class="p">100%</span><button class="z" aria-label="Zoom out">${ic('minus')}</button><input type="range" aria-label="Zoom" min="0" max="100" value="50"><button class="z" aria-label="Zoom in">${ic('plus')}</button></div>`);

define('xl-taskbar', `:host{display:flex;height:39px;align-items:center;color:#fff;border-top:1px solid #5a5f66;background:linear-gradient(60deg,transparent 42%,#20262b 44%,#1c2125 49%,transparent 51%,transparent 56%,#1e2429 60%,transparent 66%),#090c12}
button{display:flex;align-items:center;justify-content:center;flex:none}.s{width:54px}.q{width:62px}.a{width:58px;height:38px;margin-right:4px;border:1px solid #8e9296;border-radius:3px;background:linear-gradient(135deg,#6d7073,#3c4043 45%,#1f2326 50%,#303437)}
.on{background:linear-gradient(120deg,#c9cbcd,#7f8386 50%,#9b9ea1)}.g{width:4px}.h{width:2px}.tray{margin-left:auto;display:flex;align-items:center;gap:8px}
time{font-size:12px;line-height:17px;text-align:center;width:62px}.d{width:12px;height:38px;border:1px solid #666;background:linear-gradient(90deg,#444,#15181c);margin-right:2px}`,
`<button class="s" aria-label="Start">${ic('orb')}</button><span class="g"></span><button class="q" aria-label="Internet Explorer">${ic('ie')}</button><button class="q" aria-label="Explorer">${ic('folder')}</button><button class="q" aria-label="Media Player">${ic('wmp')}</button><span class="h"></span><button class="a" aria-label="Chrome">${ic('chrome')}</button><button class="a" aria-label="P3G">${ic('p3g')}</button><button class="a" aria-label="WinRAR">${ic('rar')}</button><button class="a on" aria-label="Excel">${ic('xlBig')}</button>
<div class="tray"><svg width="8" height="4" style="margin-right:6px" aria-hidden="true"><path d="M0 4h8L4 0z" fill="#fff"/></svg>${ic('flag')}${ic('plug')}${ic('net')}${ic('sound')}<time>2:43 PM<br>11/25/2012</time><button class="d" aria-label="Show desktop"></button></div>`);

define('xl-desktop', `:host{display:flex;flex-direction:column;height:100vh}:host>*{flex:none}:host>xl-sheet{flex:1}`,
'<xl-title></xl-title><xl-menu></xl-menu><xl-ribbon></xl-ribbon><xl-formula></xl-formula><xl-sheet></xl-sheet><xl-tabs></xl-tabs><xl-status></xl-status><xl-taskbar></xl-taskbar>');
</script>
</body>
</html>
